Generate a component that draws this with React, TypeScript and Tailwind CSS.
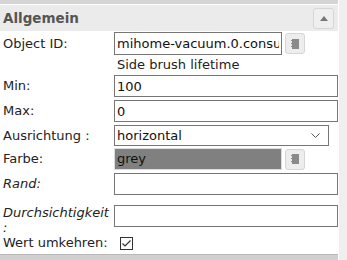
import React from 'react';

const font = { fontFamily: '"DejaVu Sans", Verdana, sans-serif' };

function PickButton() {
  return (
    <button className="ml-[3px] flex h-[21px] w-[20px] items-center justify-center rounded-[3px] border border-[#d6d6d6] bg-[#ededed]">
      <svg width="8" height="10" viewBox="0 0 8 10">
        <rect x="1" y="0" width="7" height="10" fill="#8a8a8a" />
        <rect x="0" y="1" width="2" height="1" fill="#8a8a8a" />
        <rect x="0" y="4" width="2" height="1" fill="#8a8a8a" />
        <rect x="0" y="7" width="2" height="1" fill="#8a8a8a" />
      </svg>
    </button>
  );
}

function Row({ label, italic, top, children, className = '', labelCls = 'leading-[16px]' }: { label: React.ReactNode; italic?: boolean; top?: boolean; children: React.ReactNode; className?: string; labelCls?: string }) {
  return (
    <div className={`flex ${top ? 'items-start' : 'items-center'} ${className}`}>
      <div className={`w-[114px] shrink-0 pl-[3px] text-[13px] text-[#222] ${labelCls} ${italic ? 'italic' : ''}`}>{label}</div>
      <div className="flex flex-1 items-center">{children}</div>
    </div>
  );
}

const inputCls = 'h-[22px] border border-[#767676] bg-white px-[2px] text-[13px] text-[#111] outline-none';

export default function App() {
  return (
    <div className="flex h-[260px] w-[347px] overflow-hidden bg-white" style={font}>
      <div className="flex w-[338px] flex-col">
        <div className="h-[4px] bg-[#d4d4d4]" />
        <div className="mt-[1px] flex h-[26px] items-center justify-between bg-[#ebebeb] pl-[3px] pr-[4px]">
          <span className="text-[13.5px] font-bold text-[#555]">Allgemein</span>
          <button className="flex h-[21px] w-[21px] items-center justify-center rounded-[3px] border border-[#d6d6d6] bg-[#efefef]">
            <svg width="8" height="5" viewBox="0 0 8 5">
              <path d="M4 0 L8 5 L0 5 Z" fill="#777" />
            </svg>
          </button>
        </div>

        <Row label="Object ID:" className="mt-[1px]">
          <input readOnly value="mihome-vacuum.0.consumable.side_brush" className={`${inputCls} h-[23px] w-[168px]`} />
          <PickButton />
        </Row>
        <div className="pl-[117px] pt-[2px] text-[13px] leading-[16px] text-[#222]">Side brush lifetime</div>

        <Row label="Min:" className="mt-[2px]">
          <input readOnly value="100" className={`${inputCls} w-full`} />
        </Row>
        <Row label="Max:" className="mt-[3px]">
          <input readOnly value="0" className={`${inputCls} w-full`} />
        </Row>
        <Row label="Ausrichtung :" className="mt-[3px]">
          <div className="flex h-[21px] w-[215px] items-center justify-between border border-[#767676] bg-white pl-[2px] pr-[8px] text-[13px] text-[#111]">
            <span>horizontal</span>
            <svg width="9" height="5" viewBox="0 0 9 5">
              <path d="M0.5 0.5 L4.5 4.5 L8.5 0.5" fill="none" stroke="#555" strokeWidth="1" />
            </svg>
          </div>
        </Row>
        <Row label="Farbe:" className="mt-[2px]">
          <div className="flex h-[22px] w-[168px] items-center border border-[#dcdcdc] bg-[#808080] px-[2px] text-[13px] text-[#111]">grey</div>
          <PickButton />
        </Row>
        <Row label="Rand:" italic className="mt-[3px]">
          <input readOnly value="" className={`${inputCls} w-full`} />
        </Row>
        <Row label={<>Durchsichtigkeit<br />:</>} italic top labelCls="leading-[15px]" className="mt-[10px]">
          <input readOnly value="" className={`${inputCls} w-full`} />
        </Row>
        <Row label="Wert umkehren:">
          <svg width="13" height="13" viewBox="0 0 13 13" className="ml-[6px]">
            <rect x="0.5" y="0.5" width="12" height="12" fill="#fff" stroke="#333" />
            <path d="M2.5 6.5 L5 9 L10.5 3.5" fill="none" stroke="#333" strokeWidth="1.2" />
          </svg>
        </Row>
        <div className="mt-auto h-[6px] border-t border-[#b8b8b8] bg-[#d0d0d0]" />
      </div>
      <div className="ml-[1px] w-[8px] bg-[#efefef]" />
    </div>
  );
}
